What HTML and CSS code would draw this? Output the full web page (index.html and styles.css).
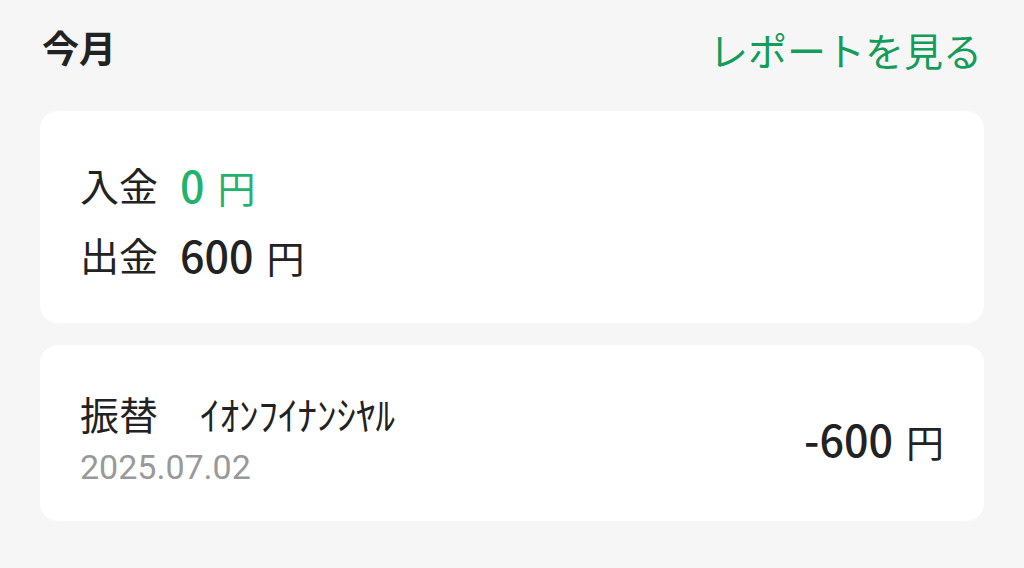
FILE: index.html
```html
<!DOCTYPE html>
<html lang="ja">
<head>
<meta charset="utf-8">
<link rel="stylesheet" href="styles.css">
</head>
<body>
<div class="page">
  <div class="header">
    <h2 class="title">今月</h2>
    <a class="report-link">レポートを見る</a>
  </div>
  <div class="card summary">
    <div class="row"><span class="label">入金</span><span class="amount in"><span class="num">0</span><span class="yen">円</span></span></div>
    <div class="row"><span class="label">出金</span><span class="amount"><span class="num">600</span><span class="yen">円</span></span></div>
  </div>
  <div class="card tx">
    <div class="tx-main">
      <div class="tx-line"><span class="tx-type">振替</span><span class="tx-name">ｲｵﾝﾌｲﾅﾝｼﾔﾙ</span></div>
      <div class="tx-date">2025.07.02</div>
    </div>
    <div class="amount tx-amount"><span class="num">-600</span><span class="yen">円</span></div>
  </div>
</div>
</body>
</html>
```
FILE: styles.css
```css
html, body {
  margin: 0;
  padding: 0;
  background: #f6f6f6;
}
body {
  font-family: "Noto Sans CJK JP", "Noto Sans", sans-serif;
  color: #222;
}
.page {
  padding: 0 40px;
  display: flex;
  flex-direction: column;
}
.header {
  height: 111px;
  display: flex;
  align-items: center;
  justify-content: space-between;
  padding: 0 2px;
}
.title {
  margin: 0;
  font-size: 37px;
  font-weight: 700;
  color: #222;
  line-height: 1;
  margin-top: -16px;
}
.report-link {
  font-size: 39px;
  color: #149c5a;
  line-height: 1;
  margin-top: -12px;
}
.card {
  background: #fff;
  border-radius: 18px;
}
.summary {
  padding: 38px 40px 32px;
  height: 212px;
  box-sizing: border-box;
}
.row {
  display: flex;
  align-items: center;
  height: 70px;
  gap: 22px;
}
.label {
  font-size: 39px;
  color: #222;
}
.amount {
  display: flex;
  align-items: baseline;
  gap: 13px;
  color: #222;
}
.amount .num {
  font-family: "Noto Sans CJK JP", "Noto Sans", sans-serif;
  font-size: 43px;
  font-weight: 500;
}
.amount .yen {
  font-size: 38px;
  font-weight: 400;
}
.amount.in {
  color: #1fb36d;
}
.tx {
  margin-top: 22px;
  height: 176px;
  box-sizing: border-box;
  padding: 0 40px;
  display: flex;
  align-items: center;
  justify-content: space-between;
}
.tx-main {
  display: flex;
  flex-direction: column;
  margin-top: 12px;
}
.tx-line {
  display: flex;
  align-items: center;
  gap: 42px;
  height: 56px;
}
.tx-type {
  font-size: 39px;
}
.tx-name {
  font-size: 39px;
}
.tx-date {
  font-family: Roboto, "Noto Sans", sans-serif;
  font-size: 34px;
  color: #999;
  height: 52px;
  line-height: 52px;
}
.tx-amount {
  margin-top: 10px;
}
```
